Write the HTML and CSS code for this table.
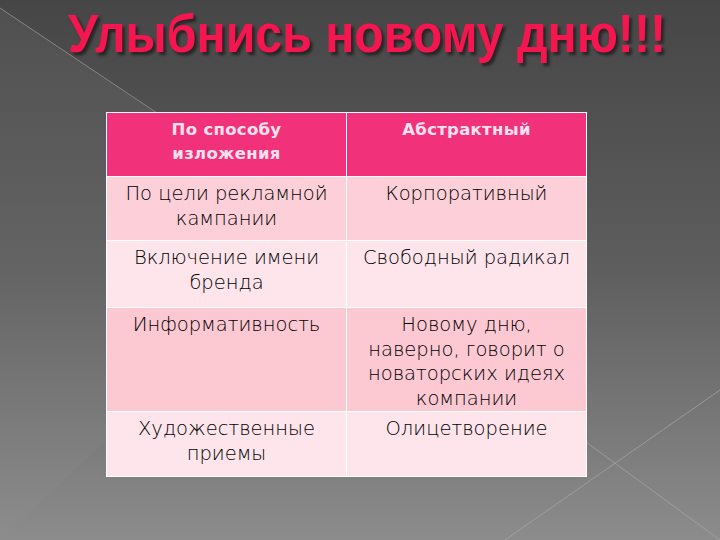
FILE: index.html
```html
<!DOCTYPE html>
<html lang="ru">
<head>
<meta charset="utf-8">
<link rel="stylesheet" href="styles.css">
</head>
<body>
<div class="slide">
  <svg class="bg" width="720" height="540" viewBox="0 0 720 540">
    <defs>
      <linearGradient id="g" x1="0" y1="0" x2="0" y2="1">
        <stop offset="0" stop-color="#464646"/>
        <stop offset="0.5" stop-color="#5e5e5e"/>
        <stop offset="1" stop-color="#8c8c8c"/>
      </linearGradient>
      <linearGradient id="g2" x1="0" y1="0" x2="0" y2="1">
        <stop offset="0" stop-color="#5a5a5a"/>
        <stop offset="0.5" stop-color="#6a6a6a"/>
        <stop offset="1" stop-color="#8e8e8e"/>
      </linearGradient>
    </defs>
    <rect width="720" height="540" fill="url(#g)"/>
    <polygon points="0,8 330,230 0,540" fill="url(#g2)" opacity="0.5"/>
    <line x1="0" y1="8" x2="160" y2="115" stroke="#858585" stroke-width="1"/>
    <line x1="560" y1="423" x2="720" y2="540" stroke="#a8a8a8" stroke-width="1" opacity="0.7"/>
    <line x1="505" y1="540" x2="720" y2="390" stroke="#a8a8a8" stroke-width="1" opacity="0.7"/>
  </svg>
  <div class="content">
    <h1 class="title">Улыбнись новому дню!!!</h1>
    <table class="grid">
      <tr class="head">
        <th>По способу<br>изложения</th>
        <th>Абстрактный</th>
      </tr>
      <tr class="r1">
        <td>По цели рекламной<br>кампании</td>
        <td>Корпоративный</td>
      </tr>
      <tr class="r2">
        <td>Включение имени<br>бренда</td>
        <td>Свободный радикал</td>
      </tr>
      <tr class="r3">
        <td>Информативность</td>
        <td>Новому дню,<br>наверно, говорит о<br>новаторских идеях<br>компании</td>
      </tr>
      <tr class="r4">
        <td>Художественные<br>приемы</td>
        <td>Олицетворение</td>
      </tr>
    </table>
  </div>
</div>
</body>
</html>
```
FILE: styles.css
```css
html, body {
  margin: 0;
  padding: 0;
}
.slide {
  position: relative;
  width: 720px;
  height: 540px;
  overflow: hidden;
  background: #555;
}
.bg {
  position: absolute;
  left: 0;
  top: 0;
}
.content {
  position: relative;
  display: flex;
  flex-direction: column;
  align-items: flex-start;
}
.title {
  margin: 4px 0 0 0;
  width: 734px;
  height: 60px;
  text-align: center;
  font-family: "Liberation Sans", Arial, sans-serif;
  font-weight: bold;
  font-size: 53px;
  line-height: 60px;
  color: #f5154f;
  text-shadow: 3px 3px 3px #262626;
  transform: scaleX(0.91);
  transform-origin: 367px 0;
  white-space: nowrap;
}
.grid {
  margin: 48px 0 0 106px;
  border-collapse: collapse;
  width: 481px;
  font-family: "DejaVu Sans", "Liberation Sans", sans-serif;
  color: #000;
}
.grid th, .grid td {
  border: 1px solid #ffffff;
  width: 240px;
  text-align: center;
  vertical-align: top;
  padding: 5px 2px 0 2px;
  box-sizing: border-box;
}
.grid th {
  font-weight: bold;
  font-size: 16.5px;
  line-height: 24px;
  letter-spacing: 0.3px;
  color: #fbe2ee;
  background: #f2317b;
}
.grid td {
  font-weight: 200;
  font-size: 19.5px;
  line-height: 24.5px;
  letter-spacing: 0;
}
.head { height: 64px; }
.r1 { height: 64px; background: #fdd0d9; }
.r2 { height: 67px; background: #fde5eb; }
.r3 { height: 101px; background: #fcc9d3; }
.r4 { height: 65px; background: #fde5eb; }
```
